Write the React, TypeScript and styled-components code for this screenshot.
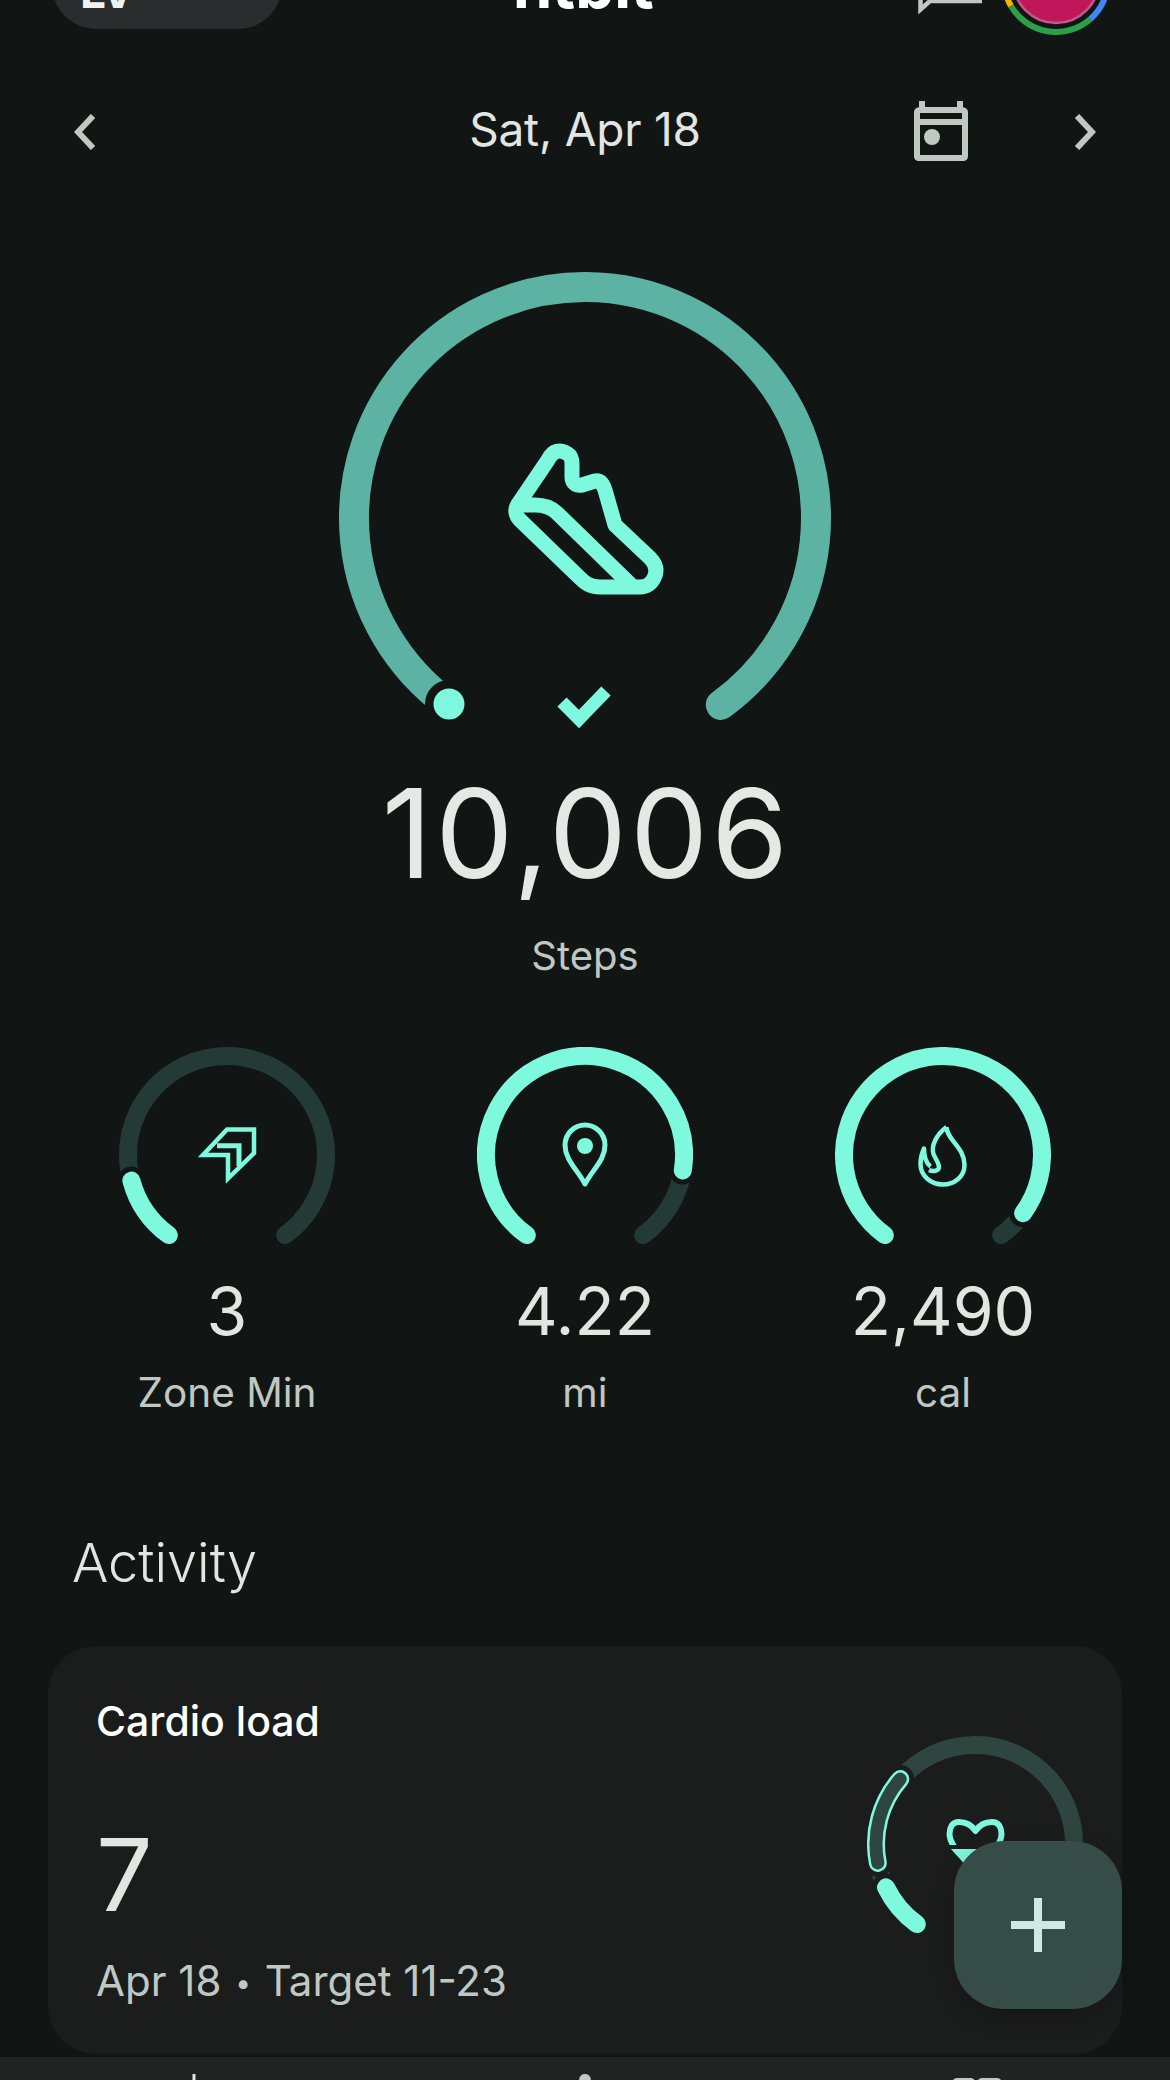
import React from "react";
import styled, { createGlobalStyle } from "styled-components";

const BG = "#111615";
const CARD = "#1b1d1c";
const MINT = "#7ef9de";
const FADED = "#5cb3a3";
const TRACK = "#243a36";
const CARD_TRACK = "#2e4540";
const FONT = `Inter, Roboto, "Noto Sans", sans-serif`;

const Global = createGlobalStyle`
  html, body { margin: 0; padding: 0; background: ${BG}; }
  * { box-sizing: border-box; }
`;

const Screen = styled.div`
  position: relative;
  width: 1170px;
  height: 2080px;
  overflow: hidden;
  display: flex;
  flex-direction: column;
  background: ${BG};
  font-family: ${FONT};
  color: #e3e5e3;
`;

const Content = styled.main`
  flex: 1;
  min-height: 0;
  overflow: hidden;
  display: flex;
  flex-direction: column;
`;

const Header = styled.header`
  height: 35px;
  flex: none;
  padding: 0 58px 0 52px;
  display: grid;
  grid-template-columns: 1fr auto 1fr;
  grid-template-rows: 35px;
  align-items: end;
`;

const Chip = styled.div`
  width: 230px;
  height: 88px;
  margin-bottom: 6px;
  padding: 0 0 15px 28px;
  border-radius: 44px;
  background: #2a2d2d;
  display: flex;
  align-items: flex-end;
  justify-self: start;
  font-size: 46px;
  line-height: 1;
  font-weight: 700;
  letter-spacing: -2px;
  color: #f0f2f0;
`;

const Brand = styled.div`
  font-size: 62px;
  line-height: 62px;
  font-weight: 700;
  color: #ffffff;
  margin-bottom: 18px;
`;

const HeaderActions = styled.div`
  display: flex;
  align-items: flex-end;
  justify-content: flex-end;
  gap: 16px;
`;

const ChatGlyph = styled.svg`
  width: 66px;
  height: 16px;
  margin-bottom: 19px;
  flex: none;
`;

const AvatarGlyph = styled.svg`
  width: 112px;
  height: 36px;
  flex: none;
`;

const DateRow = styled.nav`
  margin-top: 66px;
  height: 60px;
  flex: none;
  padding: 0 74px;
  display: grid;
  grid-template-columns: 1fr auto 1fr;
  align-items: center;
`;

const DateLabel = styled.div`
  font-size: 46px;
  line-height: 56px;
  padding-bottom: 6px;
  font-weight: 400;
  letter-spacing: -0.2px;
  color: #e3e5e3;
`;

const DateActions = styled.div`
  display: flex;
  align-items: center;
  justify-content: flex-end;
  gap: 105px;
`;

const Chevron = styled.svg`
  width: 22px;
  height: 36px;
  flex: none;
`;

const CalendarGlyph = styled.svg`
  width: 56px;
  height: 62px;
  flex: none;
`;

const MainGauge = styled.svg`
  display: block;
  flex: none;
  width: 500px;
  height: 460px;
  margin: 111px auto 0;
`;

const Arc = styled.path<{ $color: string; $width: number; $cap?: string }>`
  fill: none;
  stroke: ${(p) => p.$color};
  stroke-width: ${(p) => p.$width}px;
  stroke-linecap: ${(p) => p.$cap ?? "round"};
`;

const IconLine = styled.path<{ $width: number; $join?: string }>`
  fill: none;
  stroke: ${MINT};
  stroke-width: ${(p) => p.$width}px;
  stroke-linejoin: ${(p) => p.$join ?? "round"};
`;

const StepCount = styled.div`
  margin-top: 36px;
  font-size: 124px;
  line-height: 130px;
  font-weight: 400;
  letter-spacing: 3px;
  text-indent: 3px;
  text-align: center;
  color: #e6e8e6;
`;

const StepLabel = styled.div`
  margin-top: 34px;
  font-size: 40px;
  line-height: 48px;
  text-align: center;
  color: #c0c8c4;
`;

const Metrics = styled.section`
  margin-top: 67px;
  padding: 0 48px;
  display: grid;
  grid-template-columns: repeat(3, 1fr);
`;

const Metric = styled.div`
  display: flex;
  flex-direction: column;
  align-items: center;
`;

const RingSvg = styled.svg`
  display: block;
  width: 216px;
  height: 200px;
  flex: none;
`;

const MetricValue = styled.div`
  margin-top: 22px;
  font-size: 66px;
  line-height: 84px;
  font-weight: 400;
  color: #e3e5e3;
`;

const MetricLabel = styled.div`
  margin-top: 16px;
  font-size: 40.5px;
  line-height: 48px;
  color: #c0c8c4;
`;

const SectionTitle = styled.h2`
  margin: 114px 0 0;
  padding-left: 72px;
  font-size: 54px;
  line-height: 64px;
  font-weight: 300;
  color: #e3e5e3;
`;

const Card = styled.article`
  margin: 51px 48px 3px;
  flex: 1;
  min-height: 0;
  border-radius: 48px;
  background: ${CARD};
  padding: 48px 39px 0 48px;
  display: flex;
  justify-content: space-between;
`;

const CardText = styled.div`
  display: flex;
  flex-direction: column;
`;

const CardTitle = styled.div`
  font-size: 41px;
  line-height: 54px;
  font-weight: 500;
  color: #ffffff;
`;

const CardValue = styled.div`
  margin-top: 67px;
  font-size: 100px;
  line-height: 120px;
  font-weight: 400;
  color: #e3e5e3;
`;

const CardMeta = styled.div`
  margin-top: 22px;
  font-size: 42px;
  line-height: 48px;
  color: #c0c8c4;
  white-space: pre;
`;

const Bullet = styled.span`
  font-size: 28px;
  vertical-align: 3px;
  margin: 0 2px;
`;

const CardRing = styled(RingSvg)`
  margin-top: 42px;
`;

const Fab = styled.button`
  position: absolute;
  left: 954px;
  top: 1841px;
  width: 168px;
  height: 168px;
  padding: 0;
  border: 0;
  border-radius: 50px;
  background: #364c46;
  box-shadow: 0 8px 22px rgba(0, 0, 0, 0.22);
  display: flex;
  align-items: center;
  justify-content: center;
`;

const PlusGlyph = styled.svg`
  width: 54px;
  height: 54px;
`;

const BottomNav = styled.nav`
  height: 23px;
  flex: none;
  background: #202322;
  display: grid;
  grid-template-columns: repeat(3, 391px);
  justify-content: center;
  justify-items: center;
  overflow: hidden;
`;

const NavGlyph = styled.svg<{ $top: number }>`
  display: block;
  width: 64px;
  height: 20px;
  margin-top: ${(p) => p.$top}px;
`;

const R = 99;
const SW = 18;
const START = 36;
const END = 324;

function point(cx: number, cy: number, r: number, deg: number) {
  const a = (deg * Math.PI) / 180;
  return [cx - r * Math.sin(a), cy + r * Math.cos(a)];
}

function arc(cx: number, cy: number, r: number, from: number, to: number) {
  const [x1, y1] = point(cx, cy, r, from);
  const [x2, y2] = point(cx, cy, r, to);
  const large = to - from > 180 ? 1 : 0;
  return `M${x1.toFixed(2)} ${y1.toFixed(2)}A${r} ${r} 0 ${large} 1 ${x2.toFixed(2)} ${y2.toFixed(2)}`;
}

function Ring({
  end,
  track,
  halo,
  target,
  children,
  as: Wrapper = RingSvg,
}: {
  end: number;
  track: string;
  halo: string;
  target?: [number, number];
  children: React.ReactNode;
  as?: typeof RingSvg;
}) {
  return (
    <Wrapper viewBox="0 0 216 200">
      <Arc d={arc(108, 108, R, START, END)} $color={track} $width={SW} />
      {target && (
        <>
          <Arc d={arc(108, 108, R, target[0], target[1])} $color={halo} $width={SW + 10} />
          <Arc d={arc(108, 108, R, target[0], target[1])} $color={MINT} $width={SW} />
          <Arc d={arc(108, 108, R, target[0], target[1])} $color={track} $width={SW - 5} />
        </>
      )}
      <Arc d={arc(108, 108, R, START, end)} $color={halo} $width={SW + 10} />
      <Arc d={arc(108, 108, R, START, end)} $color={MINT} $width={SW} />
      {children}
    </Wrapper>
  );
}

function ZoneIcon() {
  return (
    <g>
      <IconLine $width={4.5} $join="miter" d="M135 82.5H108L84 108H109V131.500L135 106Z" />
      <IconLine $width={5} $join="miter" d="M98 98.700H120V119" />
    </g>
  );
}

function PinIcon() {
  return (
    <g>
      <IconLine $width={5} d="M108 137C100 122 88 113 88 98A20 20 0 1 1 128 98C128 113 116 122 108 137Z" />
      <circle cx="108" cy="99" r="8" fill={MINT} />
    </g>
  );
}

function FlameIcon() {
  return (
    <g>
      <IconLine
        $width={4.5}
        d="M111.500 80C112 93 129.500 100 129.500 118C129.500 130 119 137.500 108 137.500C96 137.500 85.500 129 85.500 117C85.500 111 87 106 89 101.500C89 110 91 116 95.500 119.500"
      />
      <IconLine $width={4.5} d="M111.500 80C101 88 96 99 98.500 107C101 113 104 116 104 120C104 124 98 125 94 123" />
    </g>
  );
}

function HeartIcon() {
  return (
    <g transform="translate(-18 0)">
      <path d="M101 112H152L126.500 140Z" fill={MINT} />
      <IconLine
        $width={6}
        d="M126.500 95C122 88 115 86 110 86C103 86 100.500 92 100.500 98C100.500 106 105 112 126.500 135C148 112 152.500 106 152.500 98C152.500 92 150 86 143 86C138 86 131 88 126.500 95Z"
      />
      <path d="M100 109H153V113H100Z" fill={CARD} />
    </g>
  );
}

export default function App() {
  return (
    <Screen>
      <Global />
      <Content>
        <Header>
          <Chip>LV</Chip>
          <Brand>fitbit</Brand>
          <HeaderActions>
            <ChatGlyph viewBox="0 0 66 16">
              <path d="M2.500 0V9.500L12 1H64" fill="none" stroke="#c0c8c4" strokeWidth="4.500" />
            </ChatGlyph>
            <AvatarGlyph viewBox="0 -1 112 36">
              <circle cx="56" cy="-20" r="43" fill="#c0175a" stroke="#c4588c" strokeWidth="2.500" />
              <Arc $cap="butt" $color="#f6b400" $width={6} d={arc(56, -20, 52, 60, 80)} />
              <Arc $cap="butt" $color="#28a14a" $width={6} d={arc(56, -20, 52, -41, 60)} />
              <Arc $cap="butt" $color="#4285f4" $width={6} d={arc(56, -20, 52, -70, -41)} />
            </AvatarGlyph>
          </HeaderActions>
        </Header>

        <DateRow>
          <Chevron viewBox="0 0 22 36">
            <path d="M19 2L4 18L19 34" fill="none" stroke="#c0c8c4" strokeWidth="6" />
          </Chevron>
          <DateLabel>Sat, Apr 18</DateLabel>
          <DateActions>
            <CalendarGlyph viewBox="0 0 56 62">
              <path
                d="M12 0V6H44V0H50V6.200C53 6.500 55 8.500 55 11V55C55 58.500 53 60 50 60H6C3 60 1 58.500 1 55V11C1 8.500 3 6.500 6 6.200V0ZM7 12V18H49V12ZM7 24V54H49V24Z"
                fill="#c0c8c4"
                fillRule="evenodd"
              />
              <circle cx="19" cy="36" r="8" fill="#c0c8c4" />
            </CalendarGlyph>
            <Chevron viewBox="0 0 22 36">
              <path d="M3 2L18 18L3 34" fill="none" stroke="#c0c8c4" strokeWidth="6" />
            </Chevron>
          </DateActions>
        </DateRow>

        <MainGauge viewBox="0 0 500 460">
          <Arc d={arc(250, 246, 231, 36.2, 324)} $color={FADED} $width={30} />
          <circle cx="114" cy="432" r="24" fill={BG} />
          <circle cx="114" cy="432" r="15.500" fill={MINT} />
          <IconLine $width={13} $join="miter" d="M227 430L244 447L271 419" />
          <g transform="translate(125 128)">
            <IconLine
              $width={15}
              d="M57.500 105L88 60C93 50 100 49 108 54C111 56 112 60 112 64L112 77C112 83 116 86 122 85L135 81C140 80 143 84 145 90L155 125L190 158C197 165 197 172 194 178C191 184 187 187 180 187H140C130 187 125 183 120 178L60 120C55 115 55 109 57.500 105Z"
            />
            <IconLine $width={15} d="M57 105H75C85 105 92 108 97 113L171 185" />
          </g>
        </MainGauge>

        <StepCount>10,006</StepCount>
        <StepLabel>Steps</StepLabel>

        <Metrics>
          <Metric>
            <Ring end={75} track={TRACK} halo={BG}>
              <ZoneIcon />
            </Ring>
            <MetricValue>3</MetricValue>
            <MetricLabel>Zone Min</MetricLabel>
          </Metric>
          <Metric>
            <Ring end={279} track={TRACK} halo={BG}>
              <PinIcon />
            </Ring>
            <MetricValue>4.22</MetricValue>
            <MetricLabel>mi</MetricLabel>
          </Metric>
          <Metric>
            <Ring end={306} track={TRACK} halo={BG}>
              <FlameIcon />
            </Ring>
            <MetricValue>2,490</MetricValue>
            <MetricLabel>cal</MetricLabel>
          </Metric>
        </Metrics>

        <SectionTitle>Activity</SectionTitle>

        <Card>
          <CardText>
            <CardTitle>Cardio load</CardTitle>
            <CardValue>7</CardValue>
            <CardMeta>
              Apr 18 <Bullet>•</Bullet> Target 11-23
            </CardMeta>
          </CardText>
          <Ring as={CardRing} end={64} track={CARD_TRACK} halo={CARD} target={[79, 131]}>
            <HeartIcon />
          </Ring>
        </Card>
      </Content>

      <BottomNav>
        <NavGlyph $top={17} viewBox="0 0 64 20">
          <path d="M30.500 0H33.500V20H30.500Z" fill="#e3e5e3" />
        </NavGlyph>
        <NavGlyph $top={17} viewBox="0 0 64 20">
          <path d="M32 0C36 0 38 3 38 7H26C26 3 28 0 32 0Z" fill="#c0c8c4" />
        </NavGlyph>
        <NavGlyph $top={21} viewBox="0 0 64 20">
          <path d="M8 6C8 2 10 0 14 0H26C30 0 31 2 31 6ZM33 6C33 2 35 0 39 0H52C56 0 58 2 58 6Z" fill="#c0c8c4" />
        </NavGlyph>
      </BottomNav>

      <Fab aria-label="Add">
        <PlusGlyph viewBox="0 0 54 54">
          <path d="M23 0H31V23H54V31H31V54H23V31H0V23H23Z" fill="#cfe8e2" />
        </PlusGlyph>
      </Fab>
    </Screen>
  );
}
